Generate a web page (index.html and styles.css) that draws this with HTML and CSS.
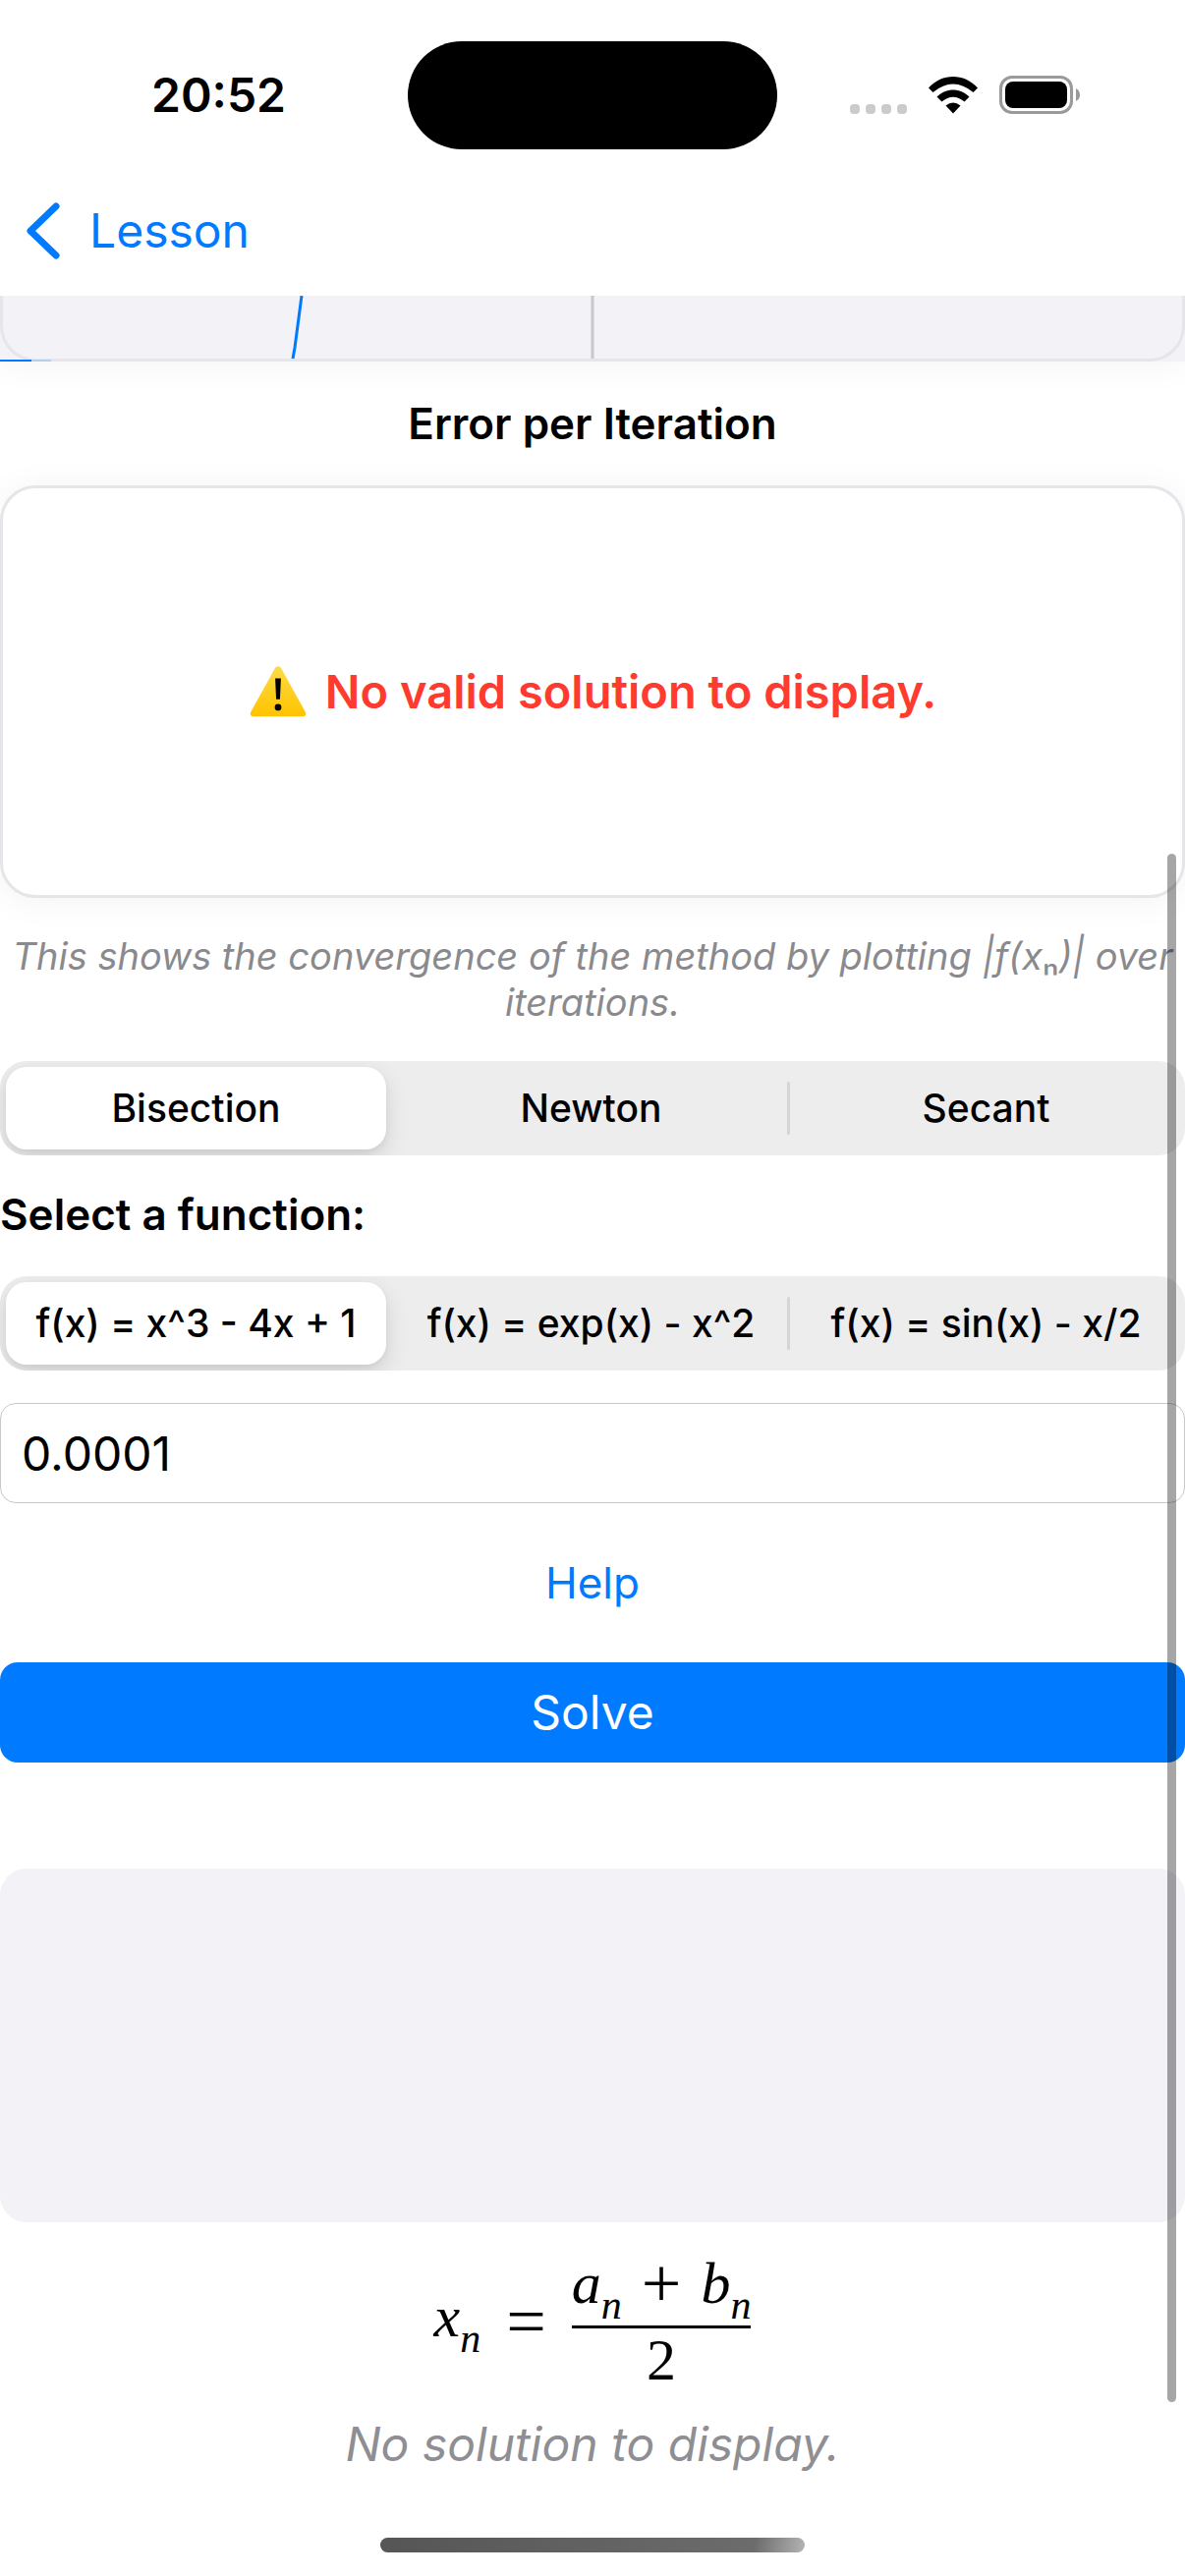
FILE: index.html
```html
<!DOCTYPE html>
<html lang="en">
<head>
<meta charset="utf-8">
<meta name="viewport" content="width=device-width, initial-scale=1">
<title>Root Finding Lesson</title>
<link rel="stylesheet" href="styles.css">
</head>
<body>
<div class="screen">
  <header class="header">
    <div class="status-bar">
      <time class="clock">20:52</time>
      <div class="island"></div>
      <div class="status-icons">
        <svg width="58" height="10" viewBox="0 0 58 10" fill="#cbcbcb" aria-hidden="true">
          <rect width="10" height="10" rx="4"/><rect x="16" width="10" height="10" rx="4"/><rect x="32" width="10" height="10" rx="4"/><rect x="48" width="10" height="10" rx="4"/>
        </svg>
        <svg class="wifi" width="50" height="38" viewBox="0 0 50 38" aria-hidden="true">
          <path d="M0 11.500C14-3.800 36-3.800 50 11.500L45.500 16Q25-1 4.500 16Z"/>
          <path d="M8.500 20.500C18 11 32 11 41.500 20.500L36.500 25.500Q25 16 13.500 25.500Z"/>
          <path d="M17.500 29.500Q25 23.500 32.500 29.500L25 37.500Z"/>
        </svg>
        <svg width="82" height="40" viewBox="0 0 82 40" aria-hidden="true">
          <rect x="1.500" y="1.500" width="72" height="36" rx="11.500" fill="none" stroke="#9a9a9a" stroke-width="3"/>
          <rect x="6" y="6" width="63" height="27" rx="8"/>
          <path d="M78 13Q82 15 82 19.500Q82 24 78 26Z" fill="#9a9a9a"/>
        </svg>
      </div>
    </div>
    <nav class="nav-bar">
      <a class="back" href="#lesson">
        <svg width="34" height="58" viewBox="0 0 34 58" fill="none" stroke="currentColor" stroke-width="7" stroke-linecap="round" stroke-linejoin="round" aria-hidden="true"><path d="M30 4L4 29L30 54"/></svg>
        Lesson
      </a>
    </nav>
  </header>

  <main class="content">
    <div class="plot">
      <div class="plot-frame">
        <svg class="plot-curve" viewBox="0 0 1206 67" preserveAspectRatio="none" aria-hidden="true">
          <path d="M603 0V64" stroke="#c7c7cc" stroke-width="3"/>
          <path d="M307 0L300 53L298 64" stroke="#007aff" stroke-width="3" fill="none"/>
          <path d="M0 66H32" stroke="#007aff" stroke-width="2"/>
          <path d="M32 66H52" stroke="#007aff" stroke-opacity=".4"/>
        </svg>
      </div>
    </div>
    <h2 class="heading chart-title">Error per Iteration</h2>
    <div class="chart">
      <svg width="60" height="54" viewBox="0 0 62 54" aria-hidden="true">
        <defs><linearGradient id="amber" x1="0" y1="0" x2="0" y2="1"><stop offset="0" stop-color="#fddb45"/><stop offset="1" stop-color="#ffc300"/></linearGradient></defs>
        <path d="M28 2Q31-1 34 2L60 49Q61 53 57 53H5Q1 53 2 49Z" fill="url(#amber)"/>
        <path d="M28 13H34L33 35H29Z"/><circle cx="31" cy="43.500" r="3.500"/>
      </svg>
      <p class="warning">No valid solution to display.</p>
    </div>
    <p class="caption">This shows the convergence of the method by plotting |f(x<span class="upright">ₙ</span>)| over iterations.</p>

    <form class="solver" action="#">
      <div class="segmented" role="radiogroup" aria-label="Method">
        <label class="segment"><input type="radio" name="method" checked><span>Bisection</span></label>
        <label class="segment"><input type="radio" name="method"><span>Newton</span></label>
        <label class="segment divided"><input type="radio" name="method"><span>Secant</span></label>
      </div>
      <h2 class="heading function-title" id="function-label">Select a function:</h2>
      <div class="segmented" role="radiogroup" aria-labelledby="function-label">
        <label class="segment"><input type="radio" name="function" checked><span>f(x) = x^3 - 4x + 1</span></label>
        <label class="segment"><input type="radio" name="function"><span>f(x) = exp(x) - x^2</span></label>
        <label class="segment divided"><input type="radio" name="function"><span>f(x) = sin(x) - x/2</span></label>
      </div>
      <input class="tolerance" type="text" inputmode="decimal" value="0.0001" aria-label="Tolerance">
      <button class="help" type="button">Help</button>
      <button class="solve" type="submit">Solve</button>
    </form>

    <div class="result"></div>
    <div class="formula">
      <span><i>x</i><sub>n</sub></span>
      <span class="sign">=</span>
      <span class="fraction">
        <span class="numerator"><span><i>a</i><sub>n</sub></span><span class="sign">+</span><span><i>b</i><sub>n</sub></span></span>
        <span class="denominator">2</span>
      </span>
    </div>
    <p class="empty">No solution to display.</p>
  </main>
  <div class="home-indicator"></div>
  <div class="scroll-thumb"></div>
</div>
</body>
</html>
```
FILE: styles.css
```css
* { box-sizing: border-box; }

body {
  margin: 0;
  background: #fff;
  color: #000;
  font-family: Inter, "Liberation Sans", sans-serif;
  font-size: 48px;
  line-height: 60px;
}

h2, p { margin: 0; }
button, input { font: inherit; }

.screen {
  position: relative;
  display: flex;
  flex-direction: column;
  min-height: 100vh;
}

.header {
  position: relative;
  z-index: 1;
  background: #fff;
}
.status-bar {
  display: grid;
  grid-template-columns: 1fr 376px 1fr;
  align-items: center;
  padding: 42px 0 18px;
}
.clock {
  padding-left: 30px;
  text-align: center;
  font-weight: 600;
}
.island {
  height: 110px;
  border-radius: 55px;
  background: #000;
}
.status-icons {
  display: flex;
  align-items: center;
  justify-content: center;
  gap: 22px;
  padding-right: 34px;
}
.status-icons svg:first-child { margin-top: 28px; }

.nav-bar {
  display: flex;
  padding: 35px 27px 36px;
}
.back {
  display: flex;
  align-items: center;
  gap: 30px;
  color: #007aff;
  text-decoration: none;
}

.content {
  display: flex;
  flex-direction: column;
}
.plot {
  background: #f2f2f7;
  box-shadow: 0 3px 36px rgba(0, 0, 0, .05);
}
.plot-frame {
  height: 67px;
  border: solid #e5e5ea;
  border-width: 0 3px 3px;
  border-radius: 0 0 36px 36px;
}
.plot-curve {
  display: block;
  width: calc(100% + 6px);
  height: 67px;
  margin-left: -3px;
}

.heading {
  font-size: 44px;
  line-height: 54px;
  font-weight: 600;
}
.chart-title {
  padding: 36px 0;
  text-align: center;
}
.function-title { padding-bottom: 3px; }
.chart {
  display: flex;
  align-items: center;
  justify-content: center;
  gap: 18px;
  min-height: 420px;
  border: 3px solid #e5e5ea;
  border-radius: 36px;
  background: #fff;
  box-shadow: 0 3px 36px rgba(0, 0, 0, .05);
}
.chart-title, .caption {
  position: relative;
}
.warning {
  color: #ff3b30;
  font-size: 47px;
  font-weight: 600;
}
.caption {
  padding: 36px 0;
  color: #8a8a8e;
  font-size: 38px;
  line-height: 47px;
  font-style: italic;
  text-align: center;
}
.upright { font-style: normal; }

.solver {
  display: flex;
  flex-direction: column;
  gap: 33px;
}
.segmented {
  display: grid;
  grid-template-columns: repeat(3, 1fr);
  min-height: 96px;
  border-radius: 27px;
  background: #ededee;
  overflow: hidden;
}
.segment {
  position: relative;
  display: flex;
  padding: 6px 9px 6px 6px;
  font-size: 39px;
  font-weight: 500;
}
.segment input {
  position: absolute;
  inset: 0;
  margin: 0;
  opacity: 0;
}
.segment span {
  flex: 1;
  display: flex;
  align-items: center;
  justify-content: center;
  border-radius: 21px;
  white-space: nowrap;
}
.segment input:checked + span {
  background: #fff;
  box-shadow: 0 9px 24px rgba(0, 0, 0, .12), 0 3px 6px rgba(0, 0, 0, .05);
}
.divided::before {
  content: "";
  position: absolute;
  left: -3px;
  top: 21px;
  bottom: 21px;
  width: 3px;
  border-radius: 2px;
  background: #d5d5d6;
}

.tolerance {
  width: 100%;
  height: 102px;
  padding: 0 21px;
  border: 1px solid #c8c8c8;
  border-radius: 16px;
  background: #fff;
  color: #000;
}
.help {
  align-self: center;
  padding: 21px;
  border: 0;
  background: none;
  color: #007aff;
  font-size: 44px;
  line-height: 54px;
}
.solve {
  width: 100%;
  padding: 21px;
  border: 0;
  border-radius: 18px;
  background: #007aff;
  color: #fff;
}

.result {
  min-height: 360px;
  margin-top: 108px;
  border-radius: 27px;
  background: #f2f2f7;
}
.formula {
  display: flex;
  align-items: center;
  justify-content: center;
  gap: 26px;
  padding: 30px 0 24px;
  font-family: "Liberation Serif", serif;
  font-size: 60px;
  line-height: 64px;
}
.formula sub {
  font-size: 42px;
  font-style: italic;
  line-height: 1;
  vertical-align: -16px;
}
.sign { font-size: 72px; }
.fraction {
  display: flex;
  flex-direction: column;
  align-items: center;
}
.numerator {
  display: flex;
  gap: 20px;
  border-bottom: 3px solid #000;
}
.empty {
  color: #8e8e93;
  font-style: italic;
  text-align: center;
}

.home-indicator {
  width: 432px;
  height: 15px;
  margin: auto auto 24px;
  border-radius: 8px;
  background: linear-gradient(100deg, #555 0%, #6c6c6c 88%, #b4b4b4 100%);
}
.scroll-thumb {
  position: absolute;
  top: 869px;
  right: 9px;
  bottom: 177px;
  width: 9px;
  border-radius: 5px;
  background: rgba(0, 0, 0, .35);
}
```
